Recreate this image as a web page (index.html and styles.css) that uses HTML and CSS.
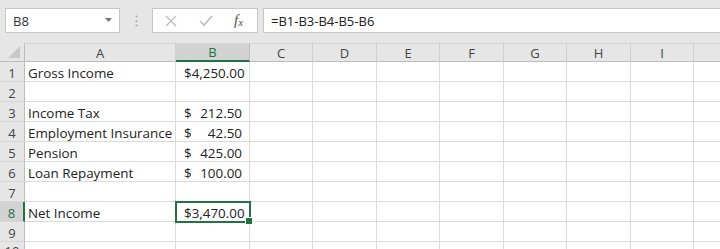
FILE: index.html
```html
<!DOCTYPE html>
<html>
<head>
<meta charset="utf-8">
<link rel="stylesheet" href="styles.css">
</head>
<body>
<div class="toolbar">
  <div class="namebox">
    <span class="nb-text">B8</span>
    <svg class="nb-arrow" width="8" height="5" viewBox="0 0 8 5"><path d="M0 0 H7 L3.5 4 Z" fill="#777"/></svg>
  </div>
  <div class="grip">
    <svg width="3" height="12" viewBox="0 0 3 12"><circle cx="1.5" cy="1.5" r="1" fill="#aaa"/><circle cx="1.5" cy="6" r="1" fill="#aaa"/><circle cx="1.5" cy="10.5" r="1" fill="#aaa"/></svg>
  </div>
  <div class="btnbox">
    <svg class="ic-x" width="12" height="12" viewBox="0 0 12 12"><path d="M1 1 L11 11 M11 1 L1 11" stroke="#bdbdbd" stroke-width="1.4" fill="none"/></svg>
    <svg class="ic-check" width="14" height="12" viewBox="0 0 14 12"><path d="M1 6 L5 10 L13 1" stroke="#bdbdbd" stroke-width="1.6" fill="none"/></svg>
    <span class="ic-fx">f<span class="fx-x">x</span></span>
  </div>
  <div class="formula">=B1-B3-B4-B5-B6</div>
</div>
<div class="sheet">
  <div class="corner"><svg width="12" height="12" viewBox="0 0 12 12"><path d="M12 0 V12 H0 Z" fill="#c8c8c8"/></svg></div>
  <div class="ch">A</div>
  <div class="ch sel">B</div>
  <div class="ch">C</div>
  <div class="ch">D</div>
  <div class="ch">E</div>
  <div class="ch">F</div>
  <div class="ch">G</div>
  <div class="ch">H</div>
  <div class="ch">I</div>
  <div class="ch last"></div>

  <div class="rh">1</div><div class="c a">Gross Income</div><div class="c b"><span>$</span><span>4,250.00</span></div><div class="c"></div><div class="c"></div><div class="c"></div><div class="c"></div><div class="c"></div><div class="c"></div><div class="c"></div><div class="c last"></div>
  <div class="rh">2</div><div class="c a"></div><div class="c b"></div><div class="c"></div><div class="c"></div><div class="c"></div><div class="c"></div><div class="c"></div><div class="c"></div><div class="c"></div><div class="c last"></div>
  <div class="rh">3</div><div class="c a">Income Tax</div><div class="c b"><span>$</span><span>212.50</span></div><div class="c"></div><div class="c"></div><div class="c"></div><div class="c"></div><div class="c"></div><div class="c"></div><div class="c"></div><div class="c last"></div>
  <div class="rh">4</div><div class="c a">Employment Insurance</div><div class="c b"><span>$</span><span>42.50</span></div><div class="c"></div><div class="c"></div><div class="c"></div><div class="c"></div><div class="c"></div><div class="c"></div><div class="c"></div><div class="c last"></div>
  <div class="rh">5</div><div class="c a">Pension</div><div class="c b"><span>$</span><span>425.00</span></div><div class="c"></div><div class="c"></div><div class="c"></div><div class="c"></div><div class="c"></div><div class="c"></div><div class="c"></div><div class="c last"></div>
  <div class="rh">6</div><div class="c a">Loan Repayment</div><div class="c b"><span>$</span><span>100.00</span></div><div class="c"></div><div class="c"></div><div class="c"></div><div class="c"></div><div class="c"></div><div class="c"></div><div class="c"></div><div class="c last"></div>
  <div class="rh">7</div><div class="c a"></div><div class="c b"></div><div class="c"></div><div class="c"></div><div class="c"></div><div class="c"></div><div class="c"></div><div class="c"></div><div class="c"></div><div class="c last"></div>
  <div class="rh sel">8</div><div class="c a">Net Income</div><div class="c b active"><span>$</span><span>3,470.00</span><i class="handle"></i></div><div class="c"></div><div class="c"></div><div class="c"></div><div class="c"></div><div class="c"></div><div class="c"></div><div class="c"></div><div class="c last"></div>
  <div class="rh">9</div><div class="c a"></div><div class="c b"></div><div class="c"></div><div class="c"></div><div class="c"></div><div class="c"></div><div class="c"></div><div class="c"></div><div class="c"></div><div class="c last"></div>
  <div class="rh cut"><span>10</span></div><div class="c"></div><div class="c"></div><div class="c"></div><div class="c"></div><div class="c"></div><div class="c"></div><div class="c"></div><div class="c"></div><div class="c"></div><div class="c last"></div>
</div>
</body>
</html>
```

FILE: styles.css
```css
* { box-sizing: border-box; }
html, body { margin: 0; padding: 0; }
body {
  width: 720px;
  height: 249px;
  overflow: hidden;
  background: #fff;
  font-family: "Open Sans", "Liberation Sans", sans-serif;
  color: #222;
}
.toolbar {
  height: 43px;
  background: #e6e6e6;
  display: flex;
  align-items: flex-start;
  padding-top: 8px;
  padding-left: 5px;
  white-space: nowrap;
}
.namebox {
  width: 115px;
  height: 25px;
  background: #fff;
  border: 1px solid #c6c6c6;
  display: flex;
  align-items: center;
  justify-content: space-between;
  padding: 0 6px 0 7px;
  font-size: 13px;
  color: #333;
}
.grip {
  width: 32px;
  height: 25px;
  display: flex;
  align-items: center;
  justify-content: center;
}
.btnbox {
  width: 106px;
  height: 25px;
  background: #fff;
  border: 1px solid #c6c6c6;
  display: flex;
  align-items: center;
  padding-left: 12px;
}
.ic-x { margin-right: 22px; }
.ic-check { margin-right: 21px; }
.ic-fx {
  font-family: "Liberation Serif", "DejaVu Serif", serif;
  font-style: italic;
  font-size: 15px;
  color: #555;
}
.fx-x { font-size: 11px; position: relative; top: 1px; }
.formula {
  margin-left: 5px;
  flex: 1;
  height: 25px;
  background: #fff;
  border: 1px solid #c6c6c6;
  border-right: none;
  display: flex;
  align-items: center;
  padding-left: 7px;
  font-size: 13px;
  color: #222;
}
.sheet {
  display: grid;
  grid-template-columns: 25px 151px 74px 63px 64px 63px 64px 63px 64px 63px 26px;
  grid-template-rows: 19px repeat(9, 20px) 8px;
}
.corner, .ch, .rh {
  background: #e6e6e6;
  color: #444;
  font-size: 13px;
  display: flex;
  align-items: center;
  justify-content: center;
}
.corner {
  border-right: 1px solid #bdbdbd;
  border-bottom: 1px solid #bdbdbd;
  justify-content: flex-end;
  align-items: flex-end;
  padding: 0 4px 3px 0;
}
.ch {
  border-right: 1px solid #d0d0d0;
  border-bottom: 1px solid #bdbdbd;
  border-top: 1px solid #d6d6d6;
}
.ch.last { border-right: none; }
.ch.sel {
  background: #d3d3d3;
  color: #217346;
  border-bottom: 2px solid #217346;
  border-right-color: #bdbdbd;
}
.rh {
  border-right: 1px solid #bdbdbd;
  border-bottom: 1px solid #d6d6d6;
  padding-top: 2px;
}
.rh.sel {
  background: #d3d3d3;
  color: #217346;
  border-right: 2px solid #217346;
}
.rh.cut {
  align-items: flex-start;
  overflow: hidden;
  border-bottom: none;
  padding-top: 2px;
  line-height: 14px;
}
.c {
  border-right: 1px solid #dadada;
  border-bottom: 1px solid #dadada;
  font-size: 13.4px;
  display: flex;
  align-items: center;
  padding-top: 2px;
  white-space: nowrap;
  overflow: visible;
}
.c.last { border-right: none; }
.c.a { padding-left: 3px; }
.c.b {
  justify-content: space-between;
  padding: 2px 7px 0 8px;
  position: relative;
}
.c.b.active {
  outline: 2px solid #217346;
  outline-offset: -1px;
  z-index: 1;
}
.handle {
  position: absolute;
  right: -4px;
  bottom: -4px;
  width: 6px;
  height: 6px;
  background: #217346;
  border: 1px solid #fff;
  box-sizing: content-box;
}
```
